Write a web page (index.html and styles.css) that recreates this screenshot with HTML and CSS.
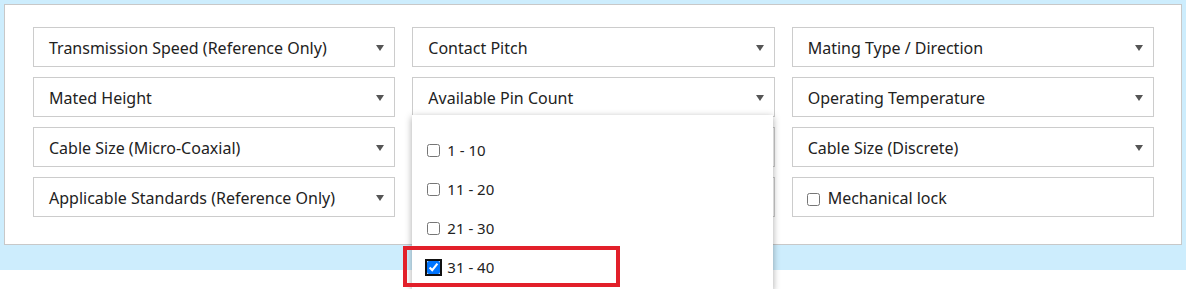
FILE: index.html
```html
<!DOCTYPE html>
<html lang="en">
<head>
    <meta charset="UTF-8">
    <title>Connector Search Filters</title>
    <link rel="stylesheet" href="styles.css">
</head>
<body>
    <div class="page">
        <div class="filter-panel">
            <div class="select">Transmission Speed (Reference Only)<span class="arrow"></span></div>
            <div class="select">Contact Pitch<span class="arrow"></span></div>
            <div class="select">Mating Type / Direction<span class="arrow"></span></div>

            <div class="select">Mated Height<span class="arrow"></span></div>
            <div class="select open">Available Pin Count<span class="arrow"></span>
                <div class="dropdown">
                    <label class="option"><input type="checkbox"> 1 - 10</label>
                    <label class="option"><input type="checkbox"> 11 - 20</label>
                    <label class="option"><input type="checkbox"> 21 - 30</label>
                    <label class="option highlight"><input type="checkbox" class="focused" checked> 31 - 40</label>
                </div>
            </div>
            <div class="select">Operating Temperature<span class="arrow"></span></div>

            <div class="select">Cable Size (Micro-Coaxial)<span class="arrow"></span></div>
            <div class="select">&nbsp;<span class="arrow"></span></div>
            <div class="select">Cable Size (Discrete)<span class="arrow"></span></div>

            <div class="select">Applicable Standards (Reference Only)<span class="arrow"></span></div>
            <div class="select">&nbsp;<span class="arrow"></span></div>
            <label class="select check"><input type="checkbox"> Mechanical lock</label>
        </div>
    </div>
</body>
</html>
```
FILE: styles.css
```css
html, body {
    height: 289px;
    overflow: hidden;
}
body {
    margin: 0;
    font-family: "Noto Sans", "Open Sans", sans-serif;
    font-size: 16px;
    color: #222;
    background: #fff;
}
.page {
    background: #cdedfd;
    padding: 4px 4px 25px;
}
.filter-panel {
    background: #fff;
    border: 1px solid #c8c8c8;
    padding: 22px 27px 27px 28px;
    display: grid;
    grid-template-columns: repeat(3, 1fr);
    column-gap: 17px;
    row-gap: 10px;
}
.select {
    position: relative;
    height: 40px;
    box-sizing: border-box;
    border: 1px solid #ccc;
    background: #fff;
    padding: 2px 30px 0 15px;
    display: flex;
    align-items: center;
    white-space: nowrap;
}
.arrow {
    position: absolute;
    right: 10px;
    top: 17px;
    width: 0;
    height: 0;
    border-left: 4px solid transparent;
    border-right: 4px solid transparent;
    border-top: 6px solid #555;
}
.select.check {
    padding-left: 14px;
}
.select.check input {
    margin: 2px 8px 0 0;
}
.dropdown {
    position: absolute;
    left: -1px;
    top: 37px;
    width: 361px;
    height: 175px;
    background: #fff;
    box-shadow: 0 2px 7px rgba(0, 0, 0, 0.35);
    padding-top: 15px;
    box-sizing: border-box;
    z-index: 5;
}
.option {
    position: relative;
    display: flex;
    align-items: center;
    height: 39px;
    padding-left: 15px;
    font-size: 15px;
}
.option input {
    margin: 1px 7px 0 0;
    width: 13px;
    height: 13px;
}
.option input.focused {
    accent-color: #0075ff;
    outline: 2px solid #111;
    outline-offset: 0;
    border-radius: 2px;
}
.highlight::after {
    content: "";
    position: absolute;
    left: -9px;
    top: -1px;
    width: 217px;
    height: 41px;
    box-sizing: border-box;
    border: 4px solid #e2202a;
}
```
